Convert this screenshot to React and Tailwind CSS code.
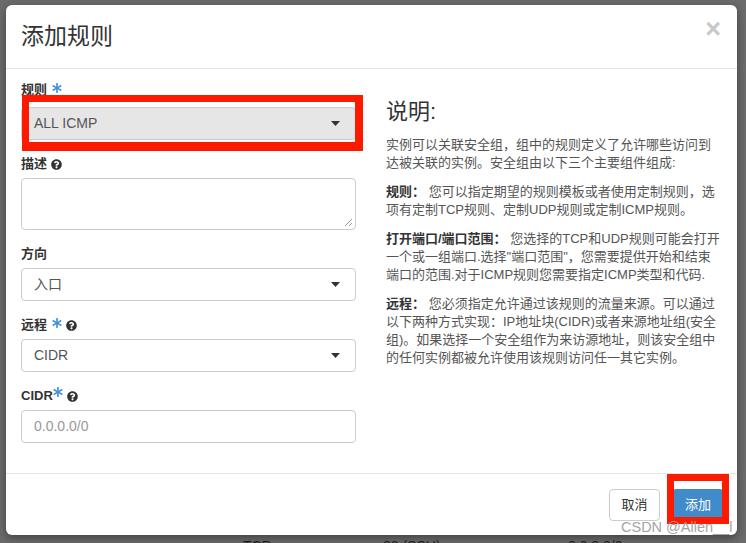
import React from "react";
import { FaQuestionCircle, FaAsterisk } from "react-icons/fa";

const Caret = () => (
  <svg width="9" height="5" viewBox="0 0 9 5" className="shrink-0">
    <polygon points="0,0 9,0 4.5,5" fill="#333" />
  </svg>
);

const Help = () => <FaQuestionCircle className="inline-block ml-[4px] text-[#333]" size={11} />;

const Star = ({ raised }) => (
  <FaAsterisk
    className={raised ? "inline-block text-[#3d8fd9] -translate-y-[4px]" : "inline-block ml-[5px] text-[#3d8fd9] -translate-y-[2px]"}
    size={10}
  />
);

const FieldLabel = ({ children, className = "mb-[5px]" }) => (
  <div className={"h-[18px] flex items-center text-[13px] font-bold text-[#333] " + className}>{children}</div>
);

const Select = ({ value, gray }) => (
  <div
    className={
      "h-[33px] flex items-center justify-between pl-[12px] pr-[15px] border border-[#ccc] rounded-[4px] text-[14px] text-[#555] " +
      (gray ? "bg-[#e6e6e6]" : "bg-white")
    }
  >
    <span>{value}</span>
    <Caret />
  </div>
);

const App = () => {
  return (
    <div className="relative w-[746px] h-[543px] overflow-hidden bg-[#6b6b6b] pt-[5px] pl-[6px] font-['Liberation_Sans','Noto_Sans_CJK_SC',sans-serif]">
      <div className="relative w-[731px] bg-white rounded-[6px] shadow-[0_3px_9px_rgba(0,0,0,0.4)]">
        {/* header */}
        <div className="h-[64px] px-[15px] flex items-center justify-between border-b border-[#e5e5e5]">
          <h4 className="text-[23px] text-[#333] leading-none">添加规则</h4>
          <span className="self-start mt-[11px] mr-[1px] text-[27px] font-bold leading-none text-[#c8c8c8]">×</span>
        </div>

        {/* body */}
        <div className="h-[404px] px-[15px] pt-[12px] flex">
          <div className="w-[335px]">
            <FieldLabel className="mb-[8px]">
              规则 <Star />
            </FieldLabel>
            <div className="relative mb-[15px]">
              <Select value="ALL ICMP" gray />
              <div className="absolute left-[1px] -top-[12px] w-[341px] h-[56px] border-[7px] border-r-[8px] border-b-[9px] border-[#fd1a00]" />
            </div>

            <FieldLabel>
              描述 <Help />
            </FieldLabel>
            <div className="relative h-[52px] mb-[15px] border border-[#ccc] rounded-[4px]">
              <svg width="9" height="9" viewBox="0 0 9 9" className="absolute right-[2px] bottom-[2px]">
                <line x1="1" y1="8" x2="8" y2="1" stroke="#999" strokeWidth="1" />
                <line x1="5" y1="8" x2="8" y2="5" stroke="#999" strokeWidth="1" />
              </svg>
            </div>

            <FieldLabel>方向</FieldLabel>
            <div className="mb-[15px]">
              <Select value="入口" />
            </div>

            <FieldLabel>
              远程 <Star /> <Help />
            </FieldLabel>
            <div className="mb-[15px]">
              <Select value="CIDR" />
            </div>

            <FieldLabel>
              CIDR<Star raised /> <Help />
            </FieldLabel>
            <div className="h-[33px] flex items-center pl-[12px] border border-[#ccc] rounded-[4px] text-[14px] text-[#999]">
              0.0.0.0/0
            </div>
          </div>

          <div className="ml-[30px] w-[336px] text-[13px] leading-[18px] text-[#555]">
            <h3 className="mt-[19px] mb-[12px] text-[22px] leading-[24px] text-[#333]">说明:</h3>
            <p className="mb-[11px]">实例可以关联安全组，组中的规则定义了允许哪些访问到达被关联的实例。安全组由以下三个主要组件组成:</p>
            <p className="mb-[11px]">
              <strong className="text-[#333]">规则：</strong> 您可以指定期望的规则模板或者使用定制规则，选项有定制TCP规则、定制UDP规则或定制ICMP规则。
            </p>
            <p className="mb-[11px]">
              <strong className="text-[#333]">打开端口/端口范围：</strong> 您选择的TCP和UDP规则可能会打开一个或一组端口.选择"端口范围"，您需要提供开始和结束端口的范围.对于ICMP规则您需要指定ICMP类型和代码.
            </p>
            <p>
              <strong className="text-[#333]">远程：</strong> 您必须指定允许通过该规则的流量来源。可以通过以下两种方式实现：IP地址块(CIDR)或者来源地址组(安全组)。如果选择一个安全组作为来访源地址，则该安全组中的任何实例都被允许使用该规则访问任一其它实例。
            </p>
          </div>
        </div>

        {/* footer */}
        <div className="h-[62px] border-t border-[#e5e5e5] pt-[15px] pr-[14px] flex justify-end gap-[13px]">
          <button className="h-[32px] w-[51px] border border-[#ccc] rounded-[4px] bg-white text-[13px] text-[#333]">取消</button>
          <div className="relative">
            <button className="h-[32px] w-[50px] rounded-[3px] bg-[#428bca] text-[13px] text-white">添加</button>
            <div className="absolute -left-[6px] -top-[15px] w-[62px] h-[50px] border-[7px] border-[#fd1a00]" />
          </div>
        </div>

        <span className="absolute left-[615px] bottom-[0px] text-[14.5px] leading-[16px] text-[#9a9a9a] opacity-90">CSDN @Allen__l</span>
      </div>

      {/* table row behind the overlay */}
      <div className="flex mt-[3px] text-[14px] leading-[16px] text-[#1f1f1f]">
        <span className="ml-[237px] w-[140px]">TCP</span>
        <span className="w-[185px]">22 (SSH)</span>
        <span>0.0.0.0/0</span>
      </div>
    </div>
  );
};

export default App;
